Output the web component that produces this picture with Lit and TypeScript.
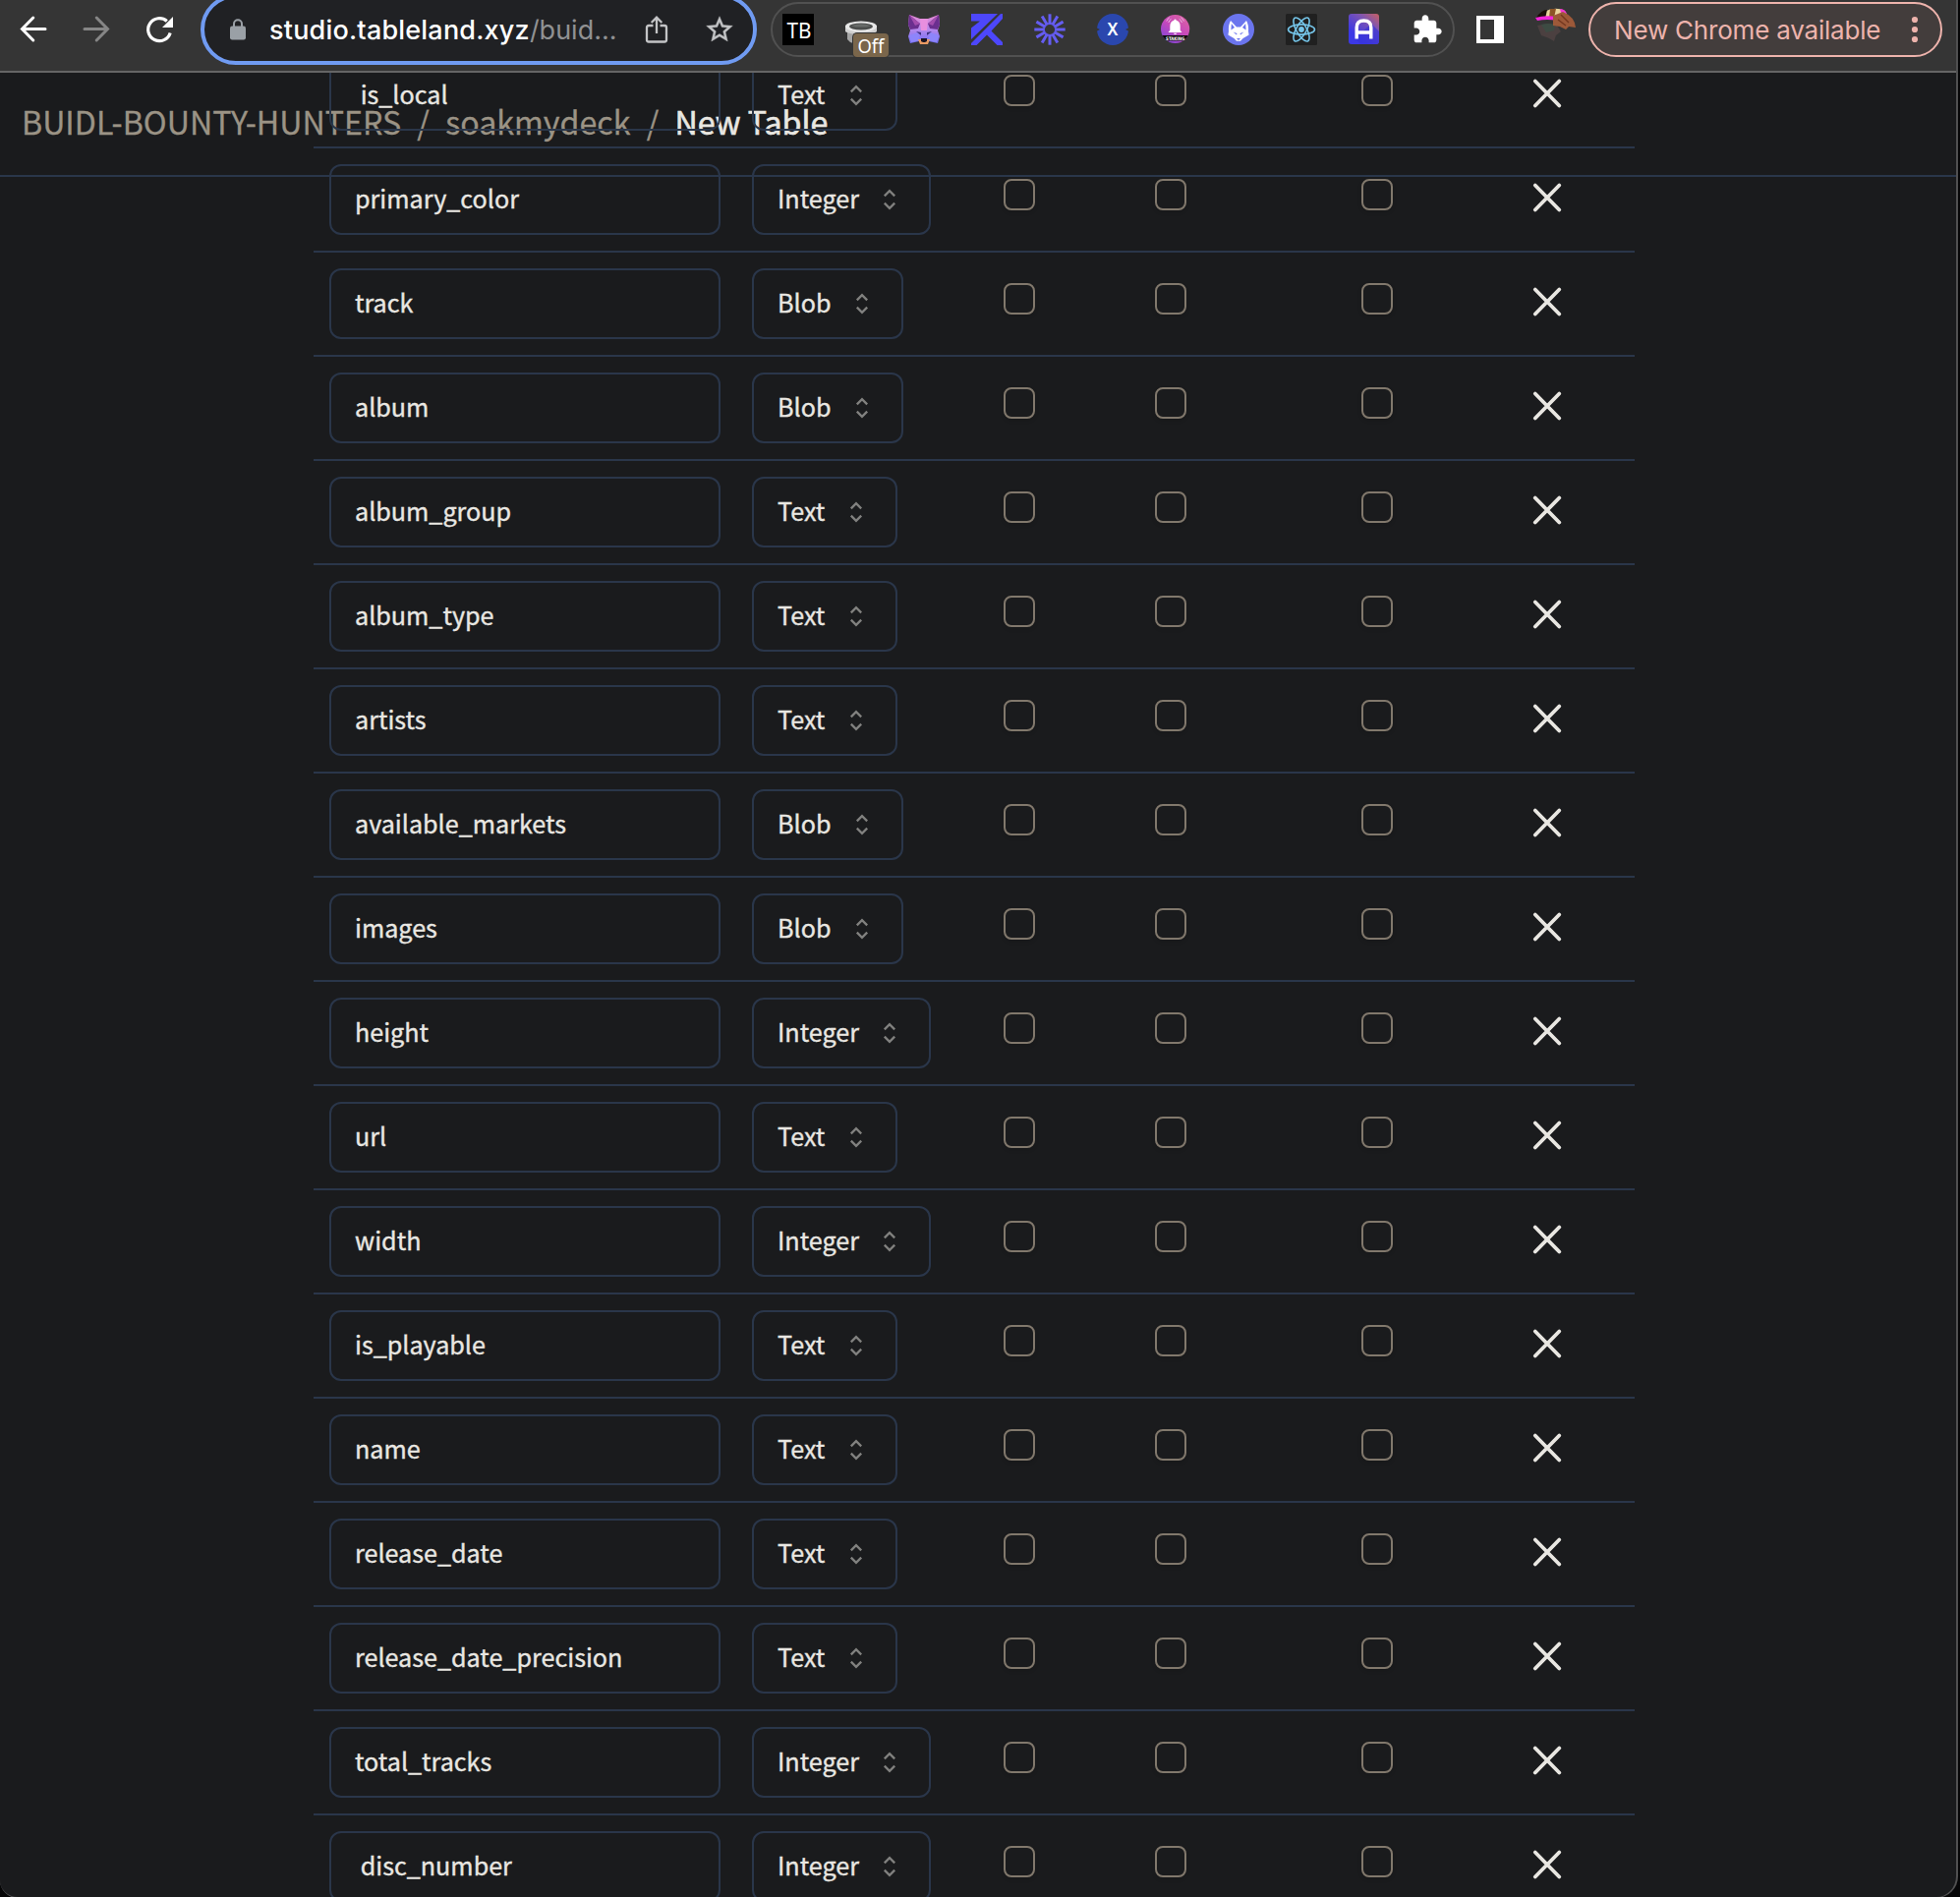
import { LitElement, html, svg, css } from "lit";
import { customElement, property } from "lit/decorators.js";

type ColumnType = "Text" | "Integer" | "Blob";

const COLUMNS: Array<[string, ColumnType]> = [
  [" is_local", "Text"],
  ["primary_color", "Integer"],
  ["track", "Blob"],
  ["album", "Blob"],
  ["album_group", "Text"],
  ["album_type", "Text"],
  ["artists", "Text"],
  ["available_markets", "Blob"],
  ["images", "Blob"],
  ["height", "Integer"],
  ["url", "Text"],
  ["width", "Integer"],
  ["is_playable", "Text"],
  ["name", "Text"],
  ["release_date", "Text"],
  ["release_date_precision", "Text"],
  ["total_tracks", "Integer"],
  [" disc_number", "Integer"],
];

const rays = Array.from({ length: 12 }, (_, i) => i * 30);

const extensionIcons = [
  // TB
  html`<svg viewBox="0 0 32 32"><rect width="32" height="32" fill="#000" /><text x="17" y="25" text-anchor="middle" textLength="25" lengthAdjust="spacingAndGlyphs" font-family="Noto Sans, sans-serif" font-size="21.500" fill="#fff">TB</text></svg>`,
  // Pot with "Off" badge
  html`<svg viewBox="0 0 32 32"><path d="M2 17h6v13l-3-1-3-3z" fill="#a5a5a5" /><path d="M0 12v6c4 4 28 4 32 0v-6z" fill="#cfcfcf" /><ellipse cx="16" cy="13" rx="16" ry="5.500" fill="#e8e8e8" /><ellipse cx="16" cy="13" rx="12" ry="3.400" fill="#4b4d4c" /><path d="M6 12.400Q16 8 26 12.400Q16 14.800 6 12.400z" fill="#686b69" /><rect x="7" y="19" width="38" height="26" rx="5" fill="#353535" /><rect x="8" y="20" width="36" height="24" rx="4" fill="#7a664b" /><text x="26" y="39.700" text-anchor="middle" textLength="27" lengthAdjust="spacingAndGlyphs" font-family="Noto Sans, sans-serif" font-size="20" fill="#fff">Off</text></svg>`,
  // Fox
  html`<svg viewBox="0 0 32 32"><defs><linearGradient id="fox" x1="0" y1="0" x2="0" y2="1"><stop offset="0" stop-color="#e58bd3" /><stop offset=".5" stop-color="#b588ec" /><stop offset="1" stop-color="#6a6af5" /></linearGradient></defs><path d="M1 1l11 4h8l11-4 1 10-2 6 2 6-2 7-9-2-3 3h-4l-3-3-9 2-2-7 2-6-2-6z" fill="url(#fox)" /><path d="M1 1l11 9-2 5-8 1-2-5z" fill="#6b2f8f" /><path d="M31 1l-11 9 2 5 8 1 2-5z" fill="#6b2f8f" /><path d="M1 1l11 9-5 2zM31 1l-11 9 5 2z" fill="#a24dad" /><path d="M12 5h8l-1 12h-6z" fill="#e88fdf" /><path d="M1 22l9-3 2 8-9 2zM31 22l-9-3-2 8 9 2z" fill="#8d85fb" /><path d="M8 18l5 1 0 3zM24 18l-5 1 0 3z" fill="#3a2f80" /><path d="M10 26h12l-2 5h-8z" fill="#ea9a63" /><path d="M13 25h6v3l-2 1h-2l-2-1z" fill="#1a1423" /></svg>`,
  // Angular K
  html`<svg viewBox="0 0 32 32"><path d="M0 0H27L0 26V14.500L9 7.500H0z" fill="#4d47fb" /><path d="M32 0V5L20.500 17.500 32 29V32H26.500L16 21.500 5.500 32H0V30L30 0z" fill="#4d47fb" /></svg>`,
  // Sunburst
  html`<svg viewBox="0 0 32 32"><circle cx="16" cy="16" r="6" fill="none" stroke="#6057e6" stroke-width="1.800" />${rays.map(
    (a) => svg`<path d="M16 0.300V10" stroke="#655df2" stroke-width="3" transform="rotate(${a} 16 16)" />`,
  )}</svg>`,
  // Round X
  html`<svg viewBox="0 0 32 32"><circle cx="16" cy="16" r="16" fill="#2a47ae" /><path d="M0 14.500l3 1.500-3 1.500zM32 14.500l-3 1.500 3 1.500z" fill="#353535" /><text x="16" y="22.300" text-anchor="middle" font-family="Noto Sans, sans-serif" font-weight="600" font-size="17" fill="#fff">X</text></svg>`,
  // Bell
  html`<svg viewBox="0 0 32 32"><defs><linearGradient id="bell" x1=".9" y1="0" x2=".2" y2="1"><stop offset="0" stop-color="#e0669f" /><stop offset=".5" stop-color="#c649bb" /><stop offset="1" stop-color="#7a45dc" /></linearGradient><clipPath id="bellclip"><circle cx="15.600" cy="15.500" r="14.600" /></clipPath></defs><g clip-path="url(#bellclip)"><rect width="32" height="32" fill="url(#bell)" /><rect y="22" width="32" height="5.500" fill="#0a0a0a" /></g><path d="M15.500 5.500q1 0 1.200 1.300q4 1.200 4 6v4l1.800 2.200h-14l1.800-2.200v-4q0-4.800 4-6q.2-1.300 1.200-1.300z" fill="#fff" /><path d="M13.800 19.800h3.600q-1.800 2.600-3.600 0z" fill="#fff" /><path d="M8.800 9q.6-2.500 2.700-3.700M6.800 7.500Q7.800 5 9.800 3.800M22.400 9q-.6-2.500-2.700-3.700M24.400 7.500Q23.400 5 21.400 3.800" fill="none" stroke="#e7b5e0" stroke-width="1" /><text x="15.600" y="26.600" text-anchor="middle" textLength="19" lengthAdjust="spacingAndGlyphs" font-family="DejaVu Sans, sans-serif" font-weight="700" font-size="4.800" fill="#fff">STAKING</text></svg>`,
  // Wolf
  html`<svg viewBox="0 0 32 32"><circle cx="16" cy="16" r="16" fill="#6b75ee" /><path d="M8 7l6 6.500h4L24 7q2.500 4 2 11l.600 3.500-6 3.500-2.600 2.800h-4L11.400 25l-6-3.500L6 18q-.500-7 2-11z" fill="#fff" /><path d="M8.800 10l3.200 4-3.600 2.500zM23.200 10l-3.200 4 3.600 2.500z" fill="#6b75ee" /><path d="M10.500 18.500l4 1.500-.500 1.600zM21.500 18.500l-4 1.500.500 1.600zM14 25h4l-2 2z" fill="#6b75ee" /></svg>`,
  // Atom
  html`<svg viewBox="0 0 32 32"><rect width="32" height="32" rx="1.500" fill="#202020" /><g fill="none" stroke="#75c5e9" stroke-width="1.600"><ellipse cx="16" cy="16" rx="13.500" ry="5.100" /><ellipse cx="16" cy="16" rx="13.500" ry="5.100" transform="rotate(60 16 16)" /><ellipse cx="16" cy="16" rx="13.500" ry="5.100" transform="rotate(120 16 16)" /></g><circle cx="16" cy="16" r="2.900" fill="#75c5e9" /></svg>`,
  // Rounded A
  html`<svg viewBox="0 0 32 32"><defs><linearGradient id="ag" x1="1" y1="0" x2=".35" y2=".8"><stop offset="0" stop-color="#c8605f" /><stop offset=".4" stop-color="#8055b0" /><stop offset="1" stop-color="#3c38e6" /></linearGradient></defs><rect width="31" height="31" rx="3" fill="url(#ag)" /><path d="M23 10l8 8v10q0 3-3 3H12l-5-6z" fill="#3532d8" opacity=".65" /><path d="M8.200 25.500V14q0-7 7.300-7t7.300 7v11.500M8.200 19h14.600" fill="none" stroke="#fff" stroke-width="3.400" /></svg>`,
  // Puzzle piece
  html`<svg viewBox="0 0 24 24"><path d="M20.500 11H19V7c0-1.100-.9-2-2-2h-4V3.500C13 2.120 11.880 1 10.500 1S8 2.120 8 3.500V5H4c-1.100 0-1.990.9-1.990 2v3.800H3.500c1.490 0 2.700 1.210 2.700 2.700s-1.210 2.700-2.700 2.700H2V20c0 1.100.9 2 2 2h3.800v-1.500c0-1.490 1.210-2.700 2.700-2.700 1.490 0 2.700 1.210 2.700 2.700V22H17c1.100 0 2-.9 2-2v-4h1.500c1.380 0 2.500-1.120 2.500-2.500S21.880 11 20.500 11z" fill="#fff" /></svg>`,
];

@customElement("browser-toolbar")
export class BrowserToolbar extends LitElement {
  static styles = css`
    :host { display: block; }
    svg { display: block; overflow: visible; }
    .bar {
      box-sizing: border-box;
      height: 74px;
      width: 1990px;
      display: flex;
      align-items: flex-start;
      background: #353535;
      border-bottom: 2px solid #656565;
      overflow: hidden;
      font-family: Inter, "Liberation Sans", sans-serif;
    }
    .nav { display: flex; gap: 32px; padding: 14px 0 0 18px; }
    .nav svg { width: 32px; height: 32px; }
    .omnibox {
      box-sizing: border-box;
      width: 566px;
      height: 72px;
      margin: -6px 0 0 26px;
      border: 4px solid #709bf2;
      border-radius: 36px;
      background: #202124;
      display: flex;
      align-items: center;
      padding-left: 26px;
    }
    .lock { width: 16px; height: 22px; flex: none; }
    .url {
      width: 382px;
      margin-left: 24px;
      padding-top: 2px;
      font-size: 27px;
      font-weight: 450;
      line-height: 34px;
      color: #fff;
      white-space: nowrap;
      letter-spacing: 0.2px;
    }
    .path { color: #909193; font-weight: 400; letter-spacing: 0; }
    .share { width: 24px; height: 30px; flex: none; }
    .star { width: 32px; height: 32px; flex: none; margin-left: 36px; }
    .extensions {
      box-sizing: border-box;
      width: 696px;
      height: 56px;
      margin: 2px 0 0 14px;
      border: 2px solid #515151;
      border-radius: 28px;
      display: flex;
      gap: 32px;
      padding: 10px 0 0 10px;
    }
    .extensions svg { width: 32px; height: 32px; flex: none; }
    .panel { width: 28px; height: 28px; margin: 16px 0 0 22px; }
    .avatar { width: 44px; height: 36px; margin: 7px 0 0 30px; }
    .update {
      box-sizing: border-box;
      width: 360px;
      height: 56px;
      margin: 2px 0 0 12px;
      border: 2px solid #edb3ac;
      border-radius: 28px;
      background: #433d3c;
      color: #edb3ac;
      display: flex;
      align-items: center;
      justify-content: space-between;
      padding: 0 23px 0 24px;
      font-size: 26px;
      line-height: 34px;
      letter-spacing: -0.2px;
      white-space: nowrap;
    }
    .label { padding-top: 2px; }
    .update svg { width: 6px; height: 26px; }
  `;

  render() {
    return html`
      <div class="bar">
        <div class="nav">
          <svg viewBox="0 0 32 32"><path d="M28 15.500H5M15.800 4L4.500 15.500 15.800 27" fill="none" stroke="#fff" stroke-width="3" stroke-linecap="round" /></svg>
          <svg viewBox="0 0 32 32"><path d="M4 15.500H27M16.200 4L27.500 15.500 16.200 27" fill="none" stroke="#868686" stroke-width="3" stroke-linecap="round" /></svg>
          <svg viewBox="0 0 32 32"><path d="M27.200 19.500A11.500 11.500 0 1 1 23.800 7.500" fill="none" stroke="#fff" stroke-width="3.200" /><path d="M30 3v11H19z" fill="#fff" /></svg>
        </div>
        <div class="omnibox">
          <svg class="lock" viewBox="0 0 16 22"><rect y="7.500" width="16" height="14" rx="2.200" fill="#9aa0a6" /><path d="M4 8V5.200a4 4 0 0 1 8 0V8" fill="none" stroke="#9aa0a6" stroke-width="2" /></svg>
          <div class="url">studio.tableland.xyz<span class="path">/buid...</span></div>
          <svg class="share" viewBox="0 0 24 30"><path d="M8.500 11H4q-2 0-2 2v12.500q0 2 2 2h16q2 0 2-2V13q0-2-2-2h-4.500M12 19V3.500M6.700 8L12 2.700 17.300 8" fill="none" stroke="#c3c4c6" stroke-width="2.300" /></svg>
          <svg class="star" viewBox="0 0 24 24"><path d="M22 9.240l-7.190-.62L12 2 9.190 8.630 2 9.240l5.460 4.730L5.820 21 12 17.270 18.180 21l-1.630-7.030L22 9.240zM12 15.400l-3.760 2.270 1-4.280-3.320-2.880 4.380-.38L12 6.100l1.710 4.040 4.380.38-3.320 2.880 1 4.280L12 15.400z" fill="#c3c4c6" stroke="#c3c4c6" stroke-width=".3" /></svg>
        </div>
        <div class="extensions">${extensionIcons}</div>
        <svg class="panel" viewBox="0 0 28 28"><path fill-rule="evenodd" d="M0 0h28v28H0zM4 4v20h14V4z" fill="#fff" /></svg>
        <svg class="avatar" viewBox="0 0 44 36">
          <path d="M4 19q10-3 20 0l4 6-5 4-2 6-5-3-8-3z" fill="#4b4040" />
          <path d="M8 18q8-2 14 0l-1 6-8 2z" fill="#3d4b43" />
          <path d="M11 5Q22-1 32 4l4 8H9z" fill="#e8d49b" />
          <path d="M3 11Q8 3 14 3l-2 9z" fill="#1a0f08" />
          <path d="M17 2l6 0-2 9-5 0z" fill="#8c5426" />
          <path d="M2 11q10-3 22-1v4q-10-2-20 0z" fill="#f325d9" />
          <path d="M27 2q5 0 7 5l-6-1z" fill="#f136cf" />
          <path d="M20 9l10-4q12 5 13 16l-7-1-3 3-6-3-7-1z" fill="#9d5939" />
          <path d="M28 8l8 8M25 13l8 6" stroke="#74371f" stroke-width="1.500" />
        </svg>
        <div class="update">
          <span class="label">New Chrome available</span>
          <svg viewBox="0 0 6 26"><circle cx="3" cy="3" r="3.100" fill="#edb3ac" /><circle cx="3" cy="13" r="3.100" fill="#edb3ac" /><circle cx="3" cy="23" r="3.100" fill="#edb3ac" /></svg>
        </div>
      </div>
    `;
  }
}

@customElement("column-row")
export class ColumnRow extends LitElement {
  @property() name = "";
  @property() type: ColumnType = "Text";

  static styles = css`
    :host { display: block; }
    .row {
      box-sizing: border-box;
      height: 106px;
      border-bottom: 2px solid #2a364a;
      padding: 16px;
      display: grid;
      grid-template-columns: 430px 256px 154px 210px 175px 28px;
      align-items: start;
    }
    .input, .select {
      box-sizing: border-box;
      height: 72px;
      border: 2px solid #2a364a;
      border-radius: 12px;
      padding: 0 24px;
      display: flex;
      align-items: center;
      font-size: 25.15px;
      line-height: 40px;
      color: #e9e7e2;
      -webkit-text-stroke: 0.35px #e9e7e2;
      white-space: pre;
    }
    .input { width: 398px; }
    .value { padding-bottom: 5px; }
    .select { width: 148px; justify-content: space-between; padding-right: 32px; }
    .select.integer { width: 182px; }
    .select.blob { width: 154px; }
    .chevrons { width: 16px; height: 22px; }
    .box {
      box-sizing: border-box;
      width: 32px;
      height: 32px;
      margin-top: 15px;
      border: 2px solid #81786c;
      border-radius: 8px;
      box-shadow: 0 2px 4px rgba(0, 0, 0, 0.12);
    }
    .remove { width: 28px; height: 28px; margin-top: 20px; }
    svg { display: block; overflow: visible; }
  `;

  render() {
    return html`
      <div class="row">
        <div class="input"><span class="value">${this.name}</span></div>
        <div class="select ${this.type.toLowerCase()}"><span class="value">${this.type}</span><svg class="chevrons" viewBox="0 0 16 22"><path d="M2.800 7.400L8 2.200 13.200 7.400M2.800 14.600L8 19.800 13.200 14.600" fill="none" stroke="#81817f" stroke-width="2.300" /></svg></div>
        <div class="box"></div>
        <div class="box"></div>
        <div class="box"></div>
        <svg class="remove" viewBox="0 0 28 28"><path d="M1.800 1.500l24.500 25M26.300 1.500l-24.500 25" stroke="#e9e7e2" stroke-width="3.800" stroke-linecap="round" /></svg>
      </div>
    `;
  }
}

@customElement("app-root")
export class AppRoot extends LitElement {
  static styles = css`
    :host {
      display: block;
      width: 1994px;
      height: 1930px;
      overflow: hidden;
      background: #060607;
      font-family: "Noto Sans CJK SC", "Noto Sans", sans-serif;
    }
    .window {
      box-sizing: border-box;
      position: relative;
      width: 1992px;
      height: 1931px;
      border-right: 2px solid #505051;
      border-bottom: 1px solid #505051;
      border-radius: 0 0 22px 18px;
      background: #1a1b1d;
      overflow: hidden;
    }
    .page {
      position: relative;
      height: 1857px;
      overflow: hidden;
    }
    .crumbs {
      position: absolute;
      inset: 0 0 auto 0;
      box-sizing: border-box;
      height: 106px;
      border-bottom: 2px solid #2a364a;
      display: flex;
      align-items: center;
      padding: 0 0 7px 22px;
      font-size: 32.2px;
      line-height: 48px;
      color: #9b9385;
      -webkit-text-stroke: 0.3px currentColor;
      white-space: nowrap;
    }
    .slash { margin: 0 16.2px; }
    .current { color: #e9e7e2; -webkit-text-stroke: 0.6px currentColor; }
    .columns {
      position: relative;
      width: 1344px;
      margin: -29px 0 0 319px;
    }
  `;

  render() {
    return html`
      <div class="window">
        <browser-toolbar></browser-toolbar>
        <div class="page">
          <div class="crumbs">
            <span>BUIDL-BOUNTY-HUNTERS</span><span class="slash">/</span><span>soakmydeck</span><span class="slash">/</span><span class="current">New Table</span>
          </div>
          <div class="columns">
            ${COLUMNS.map(([name, type]) => html`<column-row .name=${name} .type=${type}></column-row>`)}
          </div>
        </div>
      </div>
    `;
  }
}
